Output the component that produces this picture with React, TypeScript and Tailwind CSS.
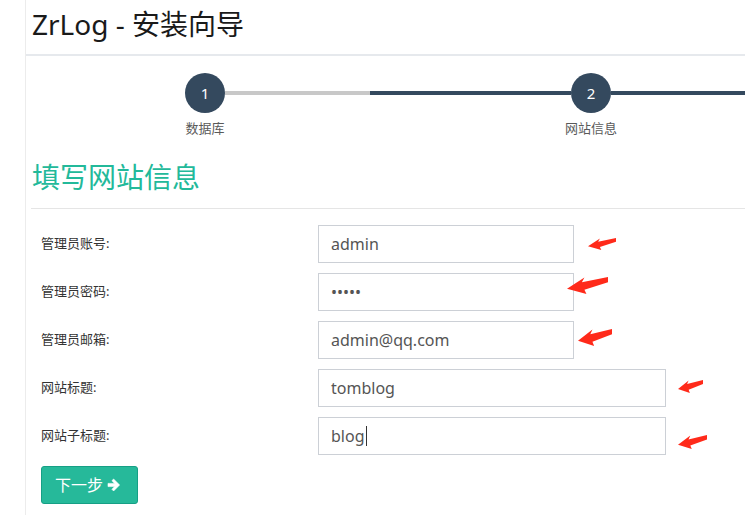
import React from 'react';

const fields = [
  { label: '管理员账号:', value: 'admin', wide: false },
  { label: '管理员密码:', value: '•••••', wide: false },
  { label: '管理员邮箱:', value: 'admin@qq.com', wide: false },
  { label: '网站标题:', value: 'tomblog', wide: true },
  { label: '网站子标题:', value: 'blog', wide: true, caret: true },
];

// hand drawn red arrows (annotation layer)
const marks = [
  { left: 588, top: 238, w: 28, h: 12 },
  { left: 567, top: 277, w: 41, h: 17 },
  { left: 578, top: 329, w: 34, h: 17 },
  { left: 678, top: 380, w: 25, h: 13 },
  { left: 678, top: 435, w: 29, h: 14 },
];

const RedArrow: React.FC<{ left: number; top: number; w: number; h: number }> = ({ left, top, w, h }) => (
  <svg
    className="absolute"
    style={{ left, top, width: w, height: h }}
    viewBox="0 0 40 16"
    preserveAspectRatio="none"
  >
    <polygon points="0,11 17,0.5 14.5,5 40,0 40,5 17,12 19,16" fill="#ff2a1a" />
  </svg>
);

const App: React.FC = () => {
  return (
    <div
      className="relative w-[745px] h-[515px] overflow-hidden bg-white pl-[25px]"
      style={{ fontFamily: '"Noto Sans", "Noto Sans CJK SC", sans-serif' }}
    >
      <div className="h-full border-l border-[#ececec]">
        <div className="h-[56px] border-b-2 border-[#e6e9ed] flex items-center pb-[6px] pl-[6px]">
          <h1 className="text-[28px] leading-[38px] text-[#1a1a1a] whitespace-nowrap">ZrLog - 安装向导</h1>
        </div>

        {/* wizard steps */}
        <div className="mt-[17px] flex items-center">
          <div className="w-[159px] shrink-0" />
          <div className="w-[40px] h-[40px] shrink-0 rounded-full bg-[#34495e] text-white text-[15px] flex items-center justify-center">1</div>
          <div className="w-[145px] h-[4px] shrink-0 bg-[#c8c8c8]" />
          <div className="w-[201px] h-[4px] shrink-0 bg-[#34495e]" />
          <div className="w-[40px] h-[40px] shrink-0 rounded-full bg-[#34495e] text-white text-[15px] flex items-center justify-center">2</div>
          <div className="flex-1 h-[4px] bg-[#34495e]" />
        </div>
        <div className="mt-[6px] flex text-[13px] leading-[18px] text-[#5a5a5a]">
          <div className="w-[119px] shrink-0" />
          <div className="w-[120px] shrink-0 text-center">数据库</div>
          <div className="w-[266px] shrink-0" />
          <div className="w-[120px] shrink-0 text-center">网站信息</div>
        </div>

        <div className="mt-[20px] ml-[5px] pl-px pb-[11px] border-b border-[#e5e5e5]">
          <h2 className="text-[28px] leading-[40px] text-[#23b99a] whitespace-nowrap">填写网站信息</h2>
        </div>

        <div className="mt-[16px] pl-[15px] flex flex-col gap-[10px]">
          {fields.map((f) => (
            <div key={f.label} className="flex items-center h-[38px]">
              <label className="w-[277px] shrink-0 text-[13px] text-[#333]">{f.label}</label>
              <div
                className={
                  (f.wide ? 'w-[348px]' : 'w-[256px]') +
                  ' h-[38px] border border-[#ccd0d6] pl-[12px] flex items-center text-[16px] text-[#555]'
                }
              >
                <span>{f.value}</span>
                {f.caret && <span className="w-px h-[20px] bg-[#333] ml-px" />}
              </div>
            </div>
          ))}
          <div className="mt-px">
            <button className="w-[97px] h-[38px] rounded-[3px] bg-[#26b99a] border border-[#169f85] text-white text-[16px] flex items-center pl-[13px] gap-[4px]">
              <span>下一步</span>
              <svg viewBox="0 0 14 14" className="w-[14px] h-[14px]">
                <path
                  d="M1 5.4h6.6L4.9 2.7 6.6 1l6 6-6 6-1.7-1.7 2.7-2.7H1z"
                  fill="#fff"
                  stroke="#fff"
                  strokeWidth="0.6"
                  strokeLinejoin="round"
                />
              </svg>
            </button>
          </div>
        </div>
      </div>

      {marks.map((m, i) => (
        <RedArrow key={i} left={m.left} top={m.top} w={m.w} h={m.h} />
      ))}
    </div>
  );
};

export default App;
